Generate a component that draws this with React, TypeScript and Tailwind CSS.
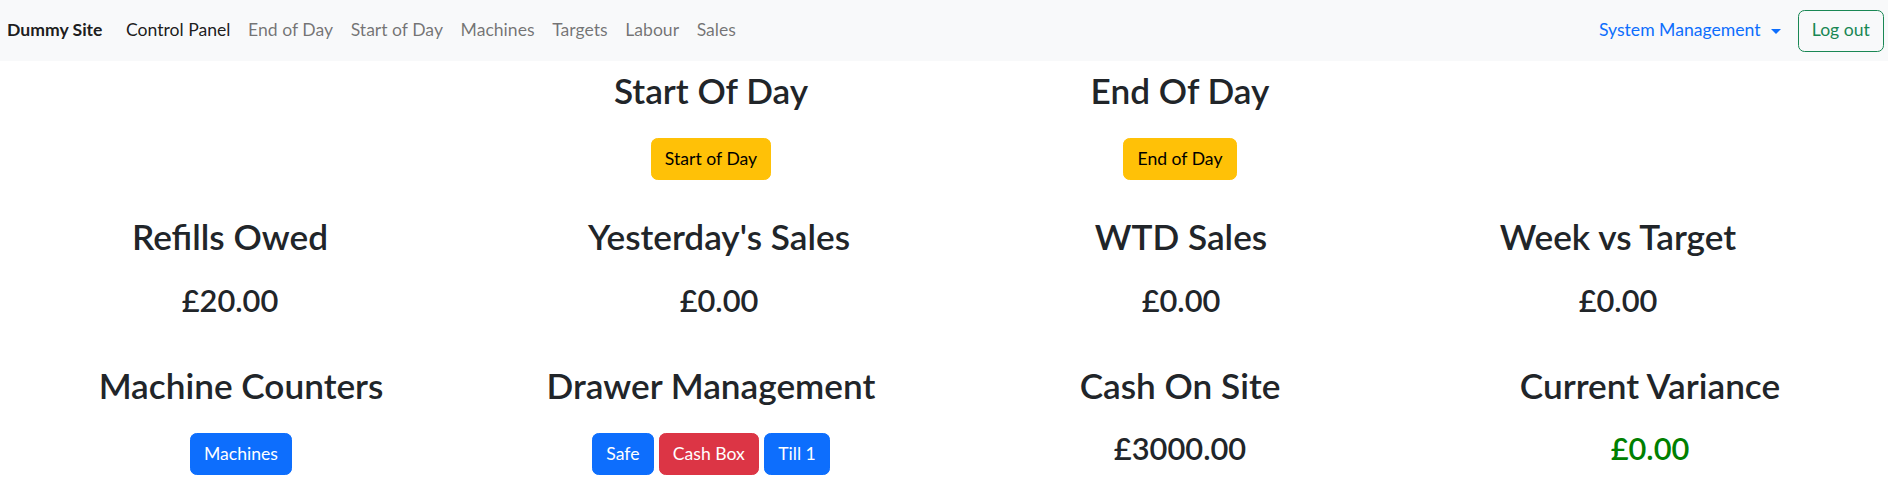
type Btn = { label: string; tone: "warning" | "primary" | "danger" };

type Tile = {
  title: string;
  value?: string;
  valueClass?: string;
  buttons?: Btn[];
};

const toneClass: Record<Btn["tone"], string> = {
  warning: "bg-[#ffc107] border-[#ffc107] text-black",
  primary: "bg-[#0d6efd] border-[#0d6efd] text-white",
  danger: "bg-[#dc3545] border-[#dc3545] text-white",
};

const navLinks = ["End of Day", "Start of Day", "Machines", "Targets", "Labour", "Sales"];

const topRow: (Tile | null)[] = [
  null,
  { title: "Start Of Day", buttons: [{ label: "Start of Day", tone: "warning" }] },
  { title: "End Of Day", buttons: [{ label: "End of Day", tone: "warning" }] },
  null,
];

const salesRow: Tile[] = [
  { title: "Refills Owed", value: "£20.00" },
  { title: "Yesterday's Sales", value: "£0.00" },
  { title: "WTD Sales", value: "£0.00" },
  { title: "Week vs Target", value: "£0.00" },
];

const cashRow: Tile[] = [
  { title: "Machine Counters", buttons: [{ label: "Machines", tone: "primary" }] },
  {
    title: "Drawer Management",
    buttons: [
      { label: "Safe", tone: "primary" },
      { label: "Cash Box", tone: "danger" },
      { label: "Till 1", tone: "primary" },
    ],
  },
  { title: "Cash On Site", value: "£3000.00" },
  { title: "Current Variance", value: "£0.00", valueClass: "text-[#008000]" },
];

function Button({ label, tone }: Btn) {
  return (
    <button
      className={`h-[42px] rounded-[6.6px] border px-[13.2px] text-[17.6px] leading-[1.5] ${toneClass[tone]}`}
    >
      {label}
    </button>
  );
}

function TileCell({ tile }: { tile: Tile | null }) {
  if (!tile) return <div />;
  return (
    <div className="flex flex-col items-center text-center">
      <h2 className="text-[35.2px] font-semibold leading-[1.2] text-[#212529]">{tile.title}</h2>
      {tile.value && (
        <h3
          className={`mt-[25px] text-[30.8px] font-semibold leading-[1.2] ${tile.valueClass ?? "text-[#212529]"}`}
        >
          {tile.value}
        </h3>
      )}
      {tile.buttons && (
        <div className="mt-[26.5px] flex justify-center gap-[5px]">
          {tile.buttons.map((b) => (
            <Button key={b.label} {...b} />
          ))}
        </div>
      )}
    </div>
  );
}

function Navbar() {
  return (
    <nav className="flex h-[61px] items-center justify-between bg-[#f8f9fa] pl-[7px] pr-[4px] text-[17.6px] leading-[1.5]">
      <div className="flex items-center">
        <span className="mr-[14.7px] font-bold text-black/90">Dummy Site</span>
        <a className="px-[8.8px] text-black/90">Control Panel</a>
        {navLinks.map((l) => (
          <a key={l} className="px-[8.8px] text-black/55">
            {l}
          </a>
        ))}
      </div>
      <div className="flex items-center">
        <a className="flex items-center px-[8.8px] text-[#0d6efd]">
          System Management
          <span className="ml-[10px] mt-[2px] h-0 w-0 border-x-[5px] border-t-[5.3px] border-x-transparent border-t-[#0d6efd]" />
        </a>
        <button className="ml-[8.2px] h-[42px] rounded-[6.6px] border border-[#198754] px-[13.2px] text-[#198754]">
          Log out
        </button>
      </div>
    </nav>
  );
}

export default function App() {
  return (
    <div className="min-h-screen bg-white font-['Lato',sans-serif]">
      <Navbar />
      <main className="pt-[8.3px]">
        <div className="grid grid-cols-[482px_458px_480px_460px]">
          {topRow.map((t, i) => (
            <TileCell key={i} tile={t} />
          ))}
        </div>
        <div className="mt-[35.3px] grid grid-cols-[460px_518px_406px_468px]">
          {salesRow.map((t) => (
            <TileCell key={t.title} tile={t} />
          ))}
        </div>
        <div className="mt-[44.7px] grid grid-cols-[482px_458px_480px_460px]">
          {cashRow.map((t) => (
            <TileCell key={t.title} tile={t} />
          ))}
        </div>
      </main>
    </div>
  );
}
